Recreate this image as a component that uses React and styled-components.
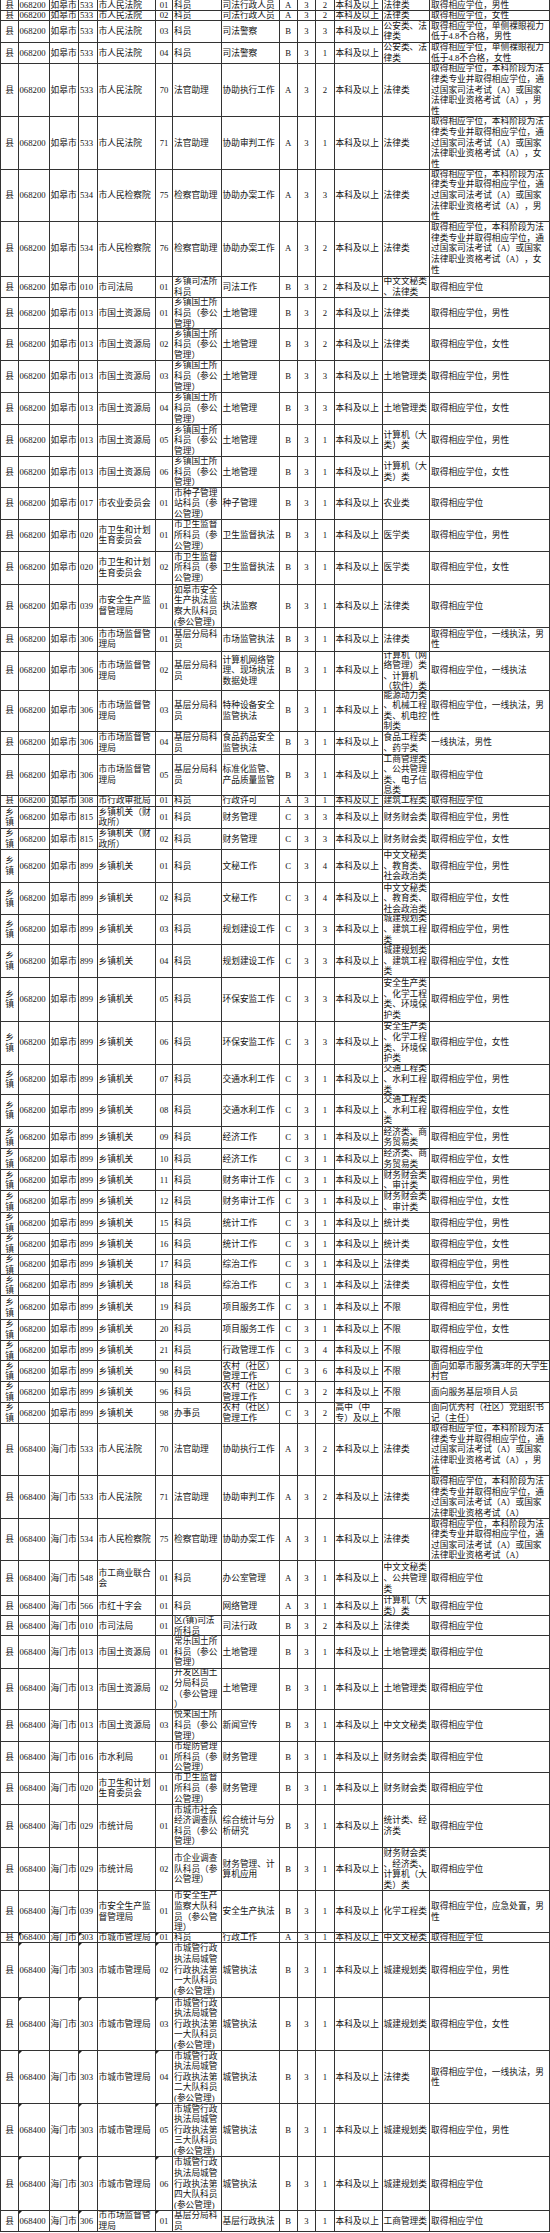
import React from "react";
import styled, { createGlobalStyle } from "styled-components";

const GlobalStyle = createGlobalStyle`
  html, body {
    margin: 0;
    padding: 0;
    background: #fff;
  }
`;

const COLS = "17.5px 31px 29.5px 18.5px 58px 17.5px 48.5px 58px 18px 18.5px 18.5px 48px 47.5px 1fr";
const ALIGN = ["center", "left", "left", "left", "left", "center", "left", "left", "center", "center", "center", "left", "left", "left"];
const FLAGGED = [1, 3, 5];

const Sheet = styled.div`
  width: 550px;
  border-left: 1px solid #333;
  box-sizing: border-box;
  font-family: "Liberation Serif", "Noto Sans CJK SC", serif;
  font-size: 8.7px;
  line-height: 10.6px;
  color: #141414;
`;

const Row = styled.div`
  display: grid;
  grid-template-columns: ${COLS};
  height: ${p => p.$h}px;
  border-bottom: 1px solid #333;
  box-sizing: border-box;
`;

const Cell = styled.div`
  position: relative;
  display: flex;
  align-items: center;
  min-width: 0;
  padding: 0 0.5px 0 1px;
  border-right: 1px solid #333;
  overflow: hidden;

  &::before {
    content: "";
    display: ${p => (p.$flag ? "block" : "none")};
    position: absolute;
    top: 0;
    left: 0;
    border-top: 3px solid #222;
    border-right: 3px solid transparent;
  }
`;

const Text = styled.span`
  display: block;
  width: 100%;
  text-align: ${p => p.$align};
  white-space: pre-wrap;
  line-break: anywhere;
  word-break: break-all;
  text-spacing-trim: space-all;
  font-kerning: none;
`;

const RG = "县|068200|如皋市";
const XZ = "乡镇|068200|如皋市";
const HM = "县|068400|海门市";
const LAW = "取得相应学位，本科阶段为法律类专业并取得相应学位，通过国家司法考试（A）或国家法律职业资格考试（A）";
const GT = "乡镇国土所科员（参公管理）|土地管理|B|3";
const TOWN = `${XZ}|899|乡镇机关`;
const CG = "市城管行政执法局城管行政执法第";

const DATA = [
  [11, `${RG}|533|市人民法院|01|科员|司法行政人员|A|3|2|本科及以上|法律类|取得相应学位，男性`],
  [9.7, `${RG}|533|市人民法院|02|科员|司法行政人员|A|3|2|本科及以上|法律类|取得相应学位，女性`],
  [22, `${RG}|533|市人民法院|03|科员|司法警察|B|3|3|本科及以上|公安类、法律类|取得相应学位，单侧裸眼视力低于4.8不合格，男性`],
  [21.3, `${RG}|533|市人民法院|04|科员|司法警察|B|3|1|本科及以上|公安类、法律类|取得相应学位，单侧裸眼视力低于4.8不合格，女性`],
  [52.7, `${RG}|533|市人民法院|70|法官助理|协助执行工作|A|3|2|本科及以上|法律类|${LAW}，男性`],
  [53.3, `${RG}|533|市人民法院|71|法官助理|协助审判工作|A|3|1|本科及以上|法律类|${LAW}，女性`],
  [51.7, `${RG}|534|市人民检察院|75|检察官助理|协助办案工作|A|3|3|本科及以上|法律类|${LAW}，男性`],
  [55, `${RG}|534|市人民检察院|76|检察官助理|协助办案工作|A|3|2|本科及以上|法律类|${LAW}，女性`],
  [21.6, `${RG}|010|市司法局|01|乡镇司法所科员|司法工作|B|3|2|本科及以上|中文文秘类、法律类|取得相应学位`],
  [31, `${RG}|013|市国土资源局|01|${GT}|2|本科及以上|法律类|取得相应学位，男性`],
  [31.7, `${RG}|013|市国土资源局|02|${GT}|2|本科及以上|法律类|取得相应学位，女性`],
  [31.7, `${RG}|013|市国土资源局|03|${GT}|3|本科及以上|土地管理类|取得相应学位，男性`],
  [32.3, `${RG}|013|市国土资源局|04|${GT}|3|本科及以上|土地管理类|取得相应学位，女性`],
  [32, `${RG}|013|市国土资源局|05|${GT}|1|本科及以上|计算机（大类）类|取得相应学位，男性`],
  [31, `${RG}|013|市国土资源局|06|${GT}|1|本科及以上|计算机（大类）类|取得相应学位，女性`],
  [32, `${RG}|017|市农业委员会|01|市种子管理站科员（参公管理）|种子管理|B|3|1|本科及以上|农业类|取得相应学位`],
  [31.7, `${RG}|020|市卫生和计划生育委员会|01|市卫生监督所科员（参公管理）|卫生监督执法|B|3|1|本科及以上|医学类|取得相应学位，男性`],
  [33.3, `${RG}|020|市卫生和计划生育委员会|02|市卫生监督所科员（参公管理）|卫生监督执法|B|3|1|本科及以上|医学类|取得相应学位，女性`],
  [43.3, `${RG}|039|市安全生产监督管理局|01|如皋市安全生产执法监察大队科员(参公管理)|执法监察|B|3|1|本科及以上|法律类|取得相应学位`],
  [23.4, `${RG}|306|市市场监督管理局|01|基层分局科员|市场监管执法|B|3|1|本科及以上|法律类|取得相应学位，一线执法，男性`],
  [39.3, `${RG}|306|市市场监督管理局|02|基层分局科员|计算机网络管理、现场执法数据处理|B|3|1|本科及以上|计算机（网络管理）类、计算机\n（软件）类|取得相应学位，一线执法`],
  [40.7, `${RG}|306|市市场监督管理局|03|基层分局科员|特种设备安全监管执法|B|3|1|本科及以上|能源动力类、机械工程类、机电控制类|取得相应学位，一线执法，男性`],
  [23.3, `${RG}|306|市市场监督管理局|04|基层分局科员|食品药品安全监管执法|B|3|1|本科及以上|食品工程类、药学类|一线执法，男性`],
  [41, `${RG}|306|市市场监督管理局|05|基层分局科员|标准化监管、产品质量监管|B|3|1|本科及以上|工商管理类、公共管理类、电子信息类|取得相应学位`],
  [10.7, `${RG}|308|市行政审批局|01|科员|行政许可|A|3|1|本科及以上|建筑工程类|取得相应学位`],
  [22.6, `${XZ}|815|乡镇机关（财政所）|01|科员|财务管理|C|3|3|本科及以上|财务财会类|取得相应学位，男性`],
  [20.7, `${XZ}|815|乡镇机关（财政所）|02|科员|财务管理|C|3|3|本科及以上|财务财会类|取得相应学位，女性`],
  [33.3, `${TOWN}|01|科员|文秘工作|C|3|4|本科及以上|中文文秘类、教育类、社会政治类|取得相应学位，男性`],
  [31.7, `${TOWN}|02|科员|文秘工作|C|3|4|本科及以上|中文文秘类、教育类、社会政治类|取得相应学位，女性`],
  [30, `${TOWN}|03|科员|规划建设工作|C|3|3|本科及以上|城建规划类、建筑工程类|取得相应学位，男性`],
  [33.3, `${TOWN}|04|科员|规划建设工作|C|3|3|本科及以上|城建规划类、建筑工程类|取得相应学位，女性`],
  [43.4, `${TOWN}|05|科员|环保安监工作|C|3|3|本科及以上|安全生产类、化学工程类、环境保护类|取得相应学位，男性`],
  [43.3, `${TOWN}|06|科员|环保安监工作|C|3|3|本科及以上|安全生产类、化学工程类、环境保护类|取得相应学位，女性`],
  [30, `${TOWN}|07|科员|交通水利工作|C|3|1|本科及以上|交通工程类、水利工程类|取得相应学位，男性`],
  [31.7, `${TOWN}|08|科员|交通水利工作|C|3|1|本科及以上|交通工程类、水利工程类|取得相应学位，女性`],
  [22.6, `${TOWN}|09|科员|经济工作|C|3|1|本科及以上|经济类、商务贸易类|取得相应学位，男性`],
  [20.7, `${TOWN}|10|科员|经济工作|C|3|1|本科及以上|经济类、商务贸易类|取得相应学位，女性`],
  [21.7, `${TOWN}|11|科员|财务审计工作|C|3|1|本科及以上|财务财会类、审计类|取得相应学位，男性`],
  [21.6, `${TOWN}|12|科员|财务审计工作|C|3|1|本科及以上|财务财会类、审计类|取得相应学位，女性`],
  [21, `${TOWN}|15|科员|统计工作|C|3|1|本科及以上|统计类|取得相应学位，男性`],
  [20.7, `${TOWN}|16|科员|统计工作|C|3|1|本科及以上|统计类|取得相应学位，女性`],
  [20.7, `${TOWN}|17|科员|综治工作|C|3|1|本科及以上|法律类|取得相应学位，男性`],
  [21, `${TOWN}|18|科员|综治工作|C|3|1|本科及以上|法律类|取得相应学位，女性`],
  [23.3, `${TOWN}|19|科员|项目服务工作|C|3|1|本科及以上|不限|取得相应学位，男性`],
  [21, `${TOWN}|20|科员|项目服务工作|C|3|1|本科及以上|不限|取得相应学位，女性`],
  [20.7, `${TOWN}|21|科员|行政管理工作|C|3|4|本科及以上|不限|取得相应学位`],
  [20.6, `${TOWN}|90|科员|农村（社区）管理工作|C|3|6|本科及以上|不限|面向如皋市服务满3年的大学生村官`],
  [21, `${TOWN}|96|科员|农村（社区）管理工作|C|3|2|本科及以上|不限|面向服务基层项目人员`],
  [20.7, `${TOWN}|98|办事员|农村（社区）管理工作|C|3|2|高中（中\n专）及以上|不限|面向优秀村（社区）党组织书记（主任）`],
  [52.7, `${HM}|533|市人民法院|70|法官助理|协助执行工作|A|3|2|本科及以上|法律类|${LAW}，男性`],
  [42.6, `${HM}|533|市人民法院|71|法官助理|协助审判工作|A|3|2|本科及以上|法律类|${LAW}`],
  [42.4, `${HM}|534|市人民检察院|75|检察官助理|协助办案工作|A|3|1|本科及以上|法律类|${LAW}`],
  [35, `${HM}|548|市工商业联合会|01|科员|办公室管理|A|3|1|本科及以上|中文文秘类、公共管理类|取得相应学位`],
  [20, `${HM}|566|市红十字会|01|科员|网络管理|A|3|1|本科及以上|计算机（大类）类|取得相应学位`],
  [20, `${HM}|010|市司法局|01|区(镇)司法所科员|司法行政|B|3|2|本科及以上|法律类|取得相应学位`],
  [32.3, `${HM}|013|市国土资源局|01|常乐国土所科员（参公管理）|土地管理|B|3|1|本科及以上|土地管理类|取得相应学位`],
  [41, `${HM}|013|市国土资源局|02|开发区国土分局科员\n（参公管理）|土地管理|B|3|1|本科及以上|土地管理类|取得相应学位`],
  [32.3, `${HM}|013|市国土资源局|03|悦来国土所科员（参公管理）|新闻宣传|B|3|1|本科及以上|中文文秘类|取得相应学位`],
  [31, `${HM}|016|市水利局|01|市堤防管理所科员（参公管理）|财务管理|B|3|1|本科及以上|财务财会类|取得相应学位`],
  [31.7, `${HM}|020|市卫生和计划生育委员会|01|市卫生监督所科员（参公管理）|财务管理|B|3|1|本科及以上|财务财会类|取得相应学位`],
  [43.3, `${HM}|029|市统计局|01|市城市社会经济调查队科员（参公管理）|综合统计与分析研究|B|3|1|本科及以上|统计类、经济类|取得相应学位`],
  [43.4, `${HM}|029|市统计局|02|市企业调查队科员（参公管理）|财务管理、计算机应用|B|3|1|本科及以上|财务财会类、经济类、计算机（大类）类|取得相应学位`],
  [41.6, `${HM}|039|市安全生产监督管理局|01|市安全生产监察大队科员（参公管理）|安全生产执法|B|3|1|本科及以上|化学工程类|取得相应学位，应急处置，男性`],
  [10, `${HM}|303|市城市管理局|01|科员|行政工作|A|3|1|本科及以上|中文文秘类|取得相应学位`, true],
  [55, `${HM}|303|市城市管理局|02|${CG}一大队科员(参公管理)|城管执法|B|3|1|本科及以上|城建规划类|取得相应学位，男性`, true],
  [53.4, `${HM}|303|市城市管理局|03|${CG}一大队科员(参公管理)|城管执法|B|3|1|本科及以上|城建规划类|取得相应学位，女性`, true],
  [52.6, `${HM}|303|市城市管理局|04|${CG}二大队科员(参公管理)|城管执法|B|3|1|本科及以上|法律类|取得相应学位，一线执法，男性`, true],
  [53.4, `${HM}|303|市城市管理局|05|${CG}三大队科员(参公管理)|城管执法|B|3|1|本科及以上|城建规划类|取得相应学位，男性`, true],
  [54, `${HM}|303|市城市管理局|06|${CG}四大队科员(参公管理)|城管执法|B|3|1|本科及以上|城建规划类|取得相应学位`, true],
  [20.3, `${HM}|306|市市场监督管理局|01|基层分局科员|基层行政执法|B|3|1|本科及以上|工商管理类|取得相应学位`, true],
];

const PostRow = ({ h, line, flag }) => (
  <Row $h={h}>
    {line.split("|").map((text, i) => (
      <Cell key={i} $flag={flag && FLAGGED.includes(i)}>
        <Text $align={ALIGN[i]}>{text}</Text>
      </Cell>
    ))}
  </Row>
);

export default function App() {
  return (
    <>
      <GlobalStyle />
      <Sheet>
        {DATA.map(([h, line, flag], i) => (
          <PostRow key={i} h={h} line={line} flag={flag} />
        ))}
      </Sheet>
    </>
  );
}
